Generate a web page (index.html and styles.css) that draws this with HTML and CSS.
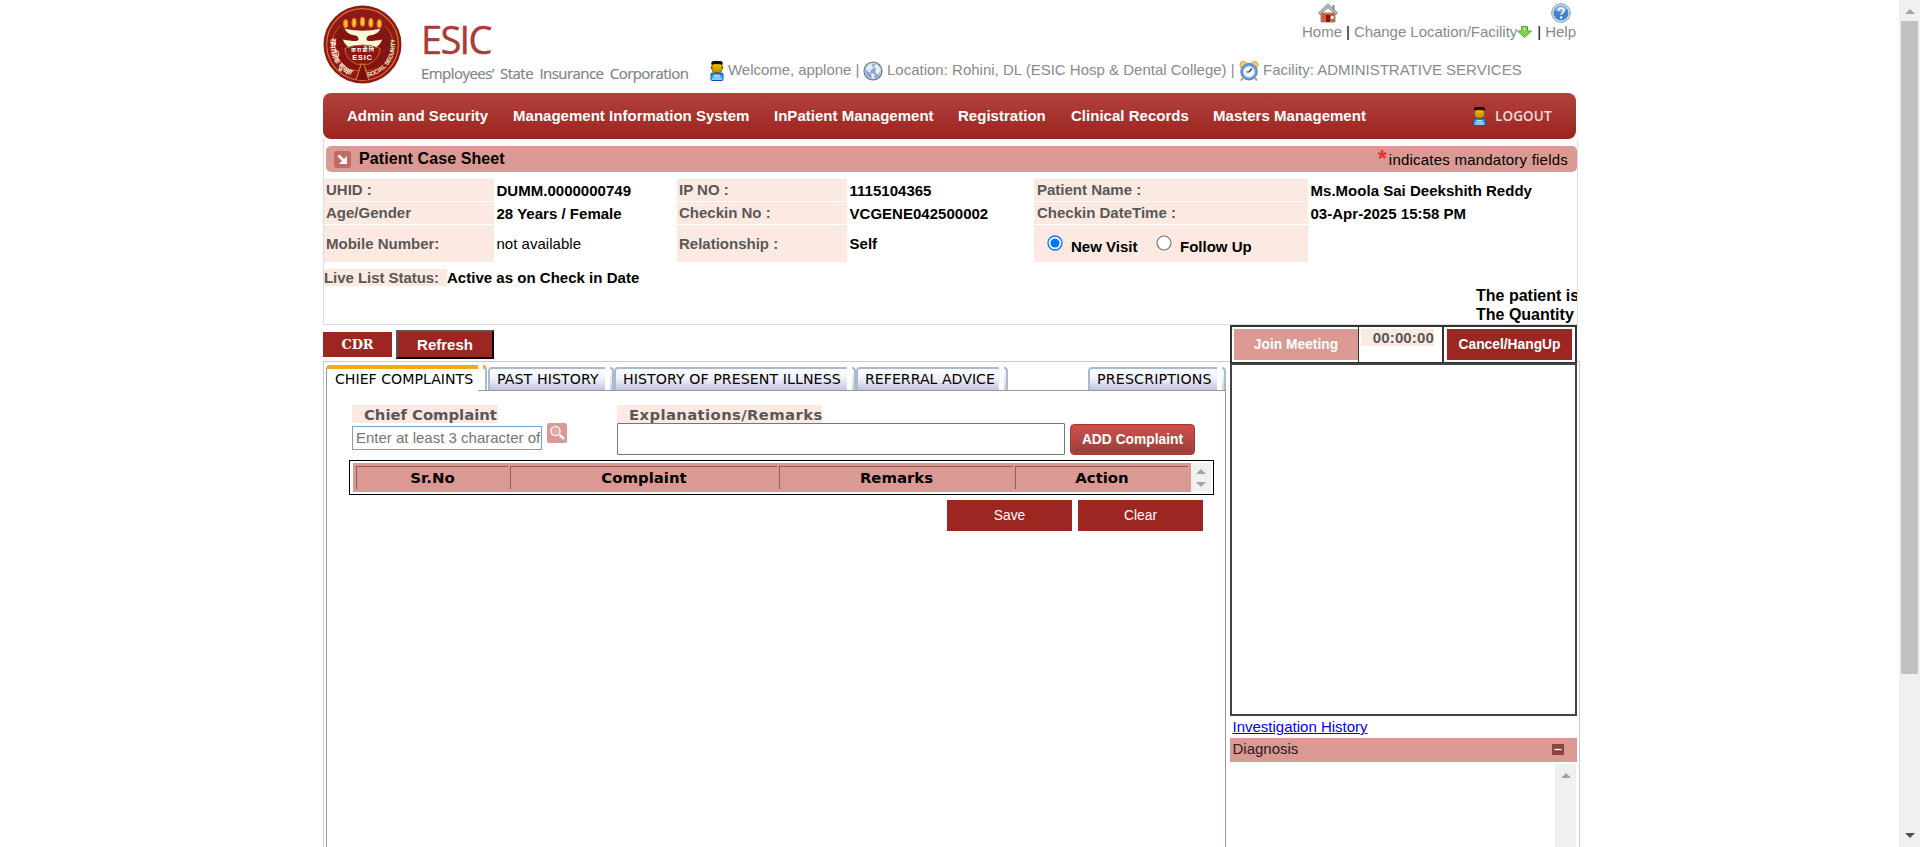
FILE: index.html
```html
<!DOCTYPE html>
<html lang="en">
<head>
<meta charset="utf-8">
<title>Patient Case Sheet</title>
<link rel="stylesheet" href="styles.css">
</head>
<body>
<svg class="defs" width="0" height="0">
  <defs>
    <linearGradient id="face" x1="0" y1="0" x2="0" y2="1"><stop offset="0" stop-color="#f0c400"/><stop offset="1" stop-color="#c48c00"/></linearGradient>
    <linearGradient id="shirt" x1="0" y1="0" x2="0" y2="1"><stop offset="0" stop-color="#0a7df0"/><stop offset="1" stop-color="#8fdcff"/></linearGradient>
    <symbol id="person" viewBox="0 0 13 20">
      <rect x="0" y="11.5" width="13" height="8.5" rx="2" fill="#0b4fc4"/>
      <rect x="1" y="12.5" width="11" height="6.5" rx="1" fill="url(#shirt)"/>
      <path d="M3.5 14.3h6M3.5 16h6" stroke="#c8efff" stroke-width="1"/>
      <path d="M4 10h5v3H4z" fill="#8a5a00"/>
      <rect x=".3" y="4.500" width="12.400" height="4" rx="2" fill="#8a5f00"/>
      <rect x="1.500" y="2" width="10" height="9.500" rx="3" fill="url(#face)" stroke="#6b4800" stroke-width=".6"/>
      <path d="M.8 3.800V2Q1 0 3 0h7q2 0 2.200 2v1.800Q6.500 2.400.8 3.800z" fill="#151008"/>
    </symbol>
  </defs>
</svg>
<div class="screen">
  <main class="page">
    <header class="header">
      <div class="brand">
        <svg class="seal" viewBox="0 0 80 80">
          <circle cx="40" cy="40" r="39.500" fill="#8d1a17"/>
          <circle cx="40" cy="40" r="36.300" fill="#8d1a17" stroke="#d8752a" stroke-width="1.200"/>
          <path d="M40 15A26 26 0 1 0 40 66A26 26 0 1 0 40 15" fill="#841411" stroke="#c25a20" stroke-width="1"/>
          <path d="M19 26c-3-6 0-12 5-14h32c5 2 8 8 5 14z" fill="#8d1a17"/>
          <g fill="#ffd23c" stroke="#f07c1c" stroke-width="1.300">
            <ellipse cx="23" cy="19" rx="2" ry="4"/><ellipse cx="31.500" cy="18" rx="2" ry="4.300"/><ellipse cx="40" cy="17" rx="2" ry="4.500"/><ellipse cx="48.500" cy="18" rx="2" ry="4.300"/><ellipse cx="57" cy="19" rx="2" ry="4"/>
          </g>
          <path d="M22 24Q40 28 58 24Q56 30 47 31Q44 32 44 35Q44 38 60 35Q57 43 49 45H31Q23 43 20 35Q36 38 36 35Q36 32 33 31Q24 30 22 24z" fill="#fffbd6"/>
          <path d="M22 44Q40 37 58 44Q57 55 46 60H34Q23 55 22 44z" fill="#8a1712" stroke="#c9682a" stroke-width="1"/>
          <path d="M33.500 76l5-16h3l5 16" fill="#7a100e" stroke="#d8752a" stroke-width="1.200"/>
          <text x="40" y="48" text-anchor="middle" class="seal-hindi">क रा बी नि</text>
          <text x="40" y="56" text-anchor="middle" class="seal-esic">ESIC</text>
          <path id="arcR" d="M45 72.500A32.500 32.500 0 0 0 72 33" fill="none"/>
          <path id="arcL" d="M8.500 33A32.500 32.500 0 0 0 36 73" fill="none"/>
          <text class="seal-ring"><textPath href="#arcR">SOCIAL SECURITY</textPath></text>
          <text class="seal-ring hindi"><textPath href="#arcL">सामाजिक सुरक्षा</textPath></text>
        </svg>
        <div class="brand-text">
          <div class="brand-name">ESIC</div>
          <div class="brand-sub">Employees’ State Insurance Corporation</div>
        </div>
      </div>
      <div class="header-info">
        <div class="top-links">
          <a class="top-link"><svg class="ico20 home" viewBox="0 0 20 20"><path d="M14.500 2h2v6h-2z" fill="#888"/><path d="M3 10h14v9H3z" fill="#e4572e" stroke="#8a8f94"/><path d="M8 12h4v7H8z" fill="#7c1d0c"/><path d="M13 13h2.500v3H13z" fill="#fff"/><path d="M10 .8l9.500 9.200-1.800 1.500L10 4.500l-7.700 7L.5 10z" fill="#b9bec2" stroke="#666c70" stroke-width=".8"/></svg><span>Home</span></a>
          <span class="bar b1">|</span>
          <a class="top-link change">Change Location/Facility</a>
          <svg class="down" viewBox="0 0 15 12"><path d="M4.500.5h6V5h4L7.500 11.500.5 5h4z" fill="#7ed348" stroke="#4fae2a"/><path d="M6 1.500h2V6" fill="#c5f29c"/></svg>
          <span class="bar b2">|</span>
          <a class="top-link"><svg class="ico20 help" viewBox="0 0 20 20"><circle cx="10" cy="10" r="9.300" fill="#d7e6f5" stroke="#7d97b5" stroke-width="1"/><circle cx="10" cy="10" r="7.500" fill="#3f86cf"/><path d="M4 7a6.500 6.500 0 0 1 12 0q-6 4-12 0z" fill="#7db4ea"/><path d="M7.300 7.800q.2-2.600 2.800-2.600 2.700 0 2.700 2.300 0 1.500-1.500 2.400-1.100.7-1.100 1.900" fill="none" stroke="#fff" stroke-width="1.800"/><circle cx="10.200" cy="14.500" r="1.200" fill="#fff"/></svg><span>Help</span></a>
        </div>
        <div class="welcome">
          <svg class="person"><use href="#person"/></svg><span class="w-user">Welcome, applone |</span>
          <svg class="ico20" viewBox="0 0 20 20"><circle cx="10" cy="10" r="9" fill="#86a4cc" stroke="#66768e" stroke-width="1.200"/><path d="M3 7q2-5 7-5l-1 3 2 2-3 2-1 3-3-2zM12 3q5 1 6 6l-3 5-3-3 1-3-2-2zM8 12l4 1-1 5H9z" fill="#e6edf6"/><circle cx="10" cy="10" r="7.800" fill="none" stroke="#c5d3e6"/></svg><span class="w-loc">Location: Rohini, DL (ESIC Hosp &amp; Dental College) |</span>
          <svg class="ico20" viewBox="0 0 20 20"><path d="M4 17l-2 2.500M16 17l2 2.500" stroke="#b99b55" stroke-width="2"/><circle cx="4.500" cy="4" r="3.600" fill="#f3cb73" stroke="#d9a441"/><circle cx="15.500" cy="4" r="3.600" fill="#f3cb73" stroke="#d9a441"/><circle cx="10" cy="10.800" r="8.200" fill="#6f9fe0" stroke="#4b7cc4"/><circle cx="10" cy="10.800" r="5.600" fill="#f2f7ff"/><path d="M10 11l3-3.500M10 11H7.500" stroke="#334" stroke-width="1.200"/></svg><span class="w-fac">Facility: ADMINISTRATIVE SERVICES</span>
        </div>
      </div>
    </header>

    <nav class="nav">
      <a class="n1">Admin and Security</a><a class="n2">Management Information System</a><a class="n3">InPatient Management</a><a class="n4">Registration</a><a class="n5">Clinical Records</a><a class="n6">Masters Management</a>
      <a class="logout"><svg class="person small"><use href="#person"/></svg>LOGOUT</a>
    </nav>

    <section class="patient">
      <div class="titlebar">
        <svg class="title-ico" viewBox="0 0 17 17"><rect width="17" height="17" rx="3" fill="#bf6b68"/><path d="M4.500 4.500L10.500 10.500" stroke="#fff" stroke-width="2.600"/><path d="M13 5v8H5z" fill="#fff"/></svg>
        <h1>Patient Case Sheet</h1>
        <span class="mandatory"><b>*</b><span>indicates mandatory fields</span></span>
      </div>
      <div class="facts">
        <div class="k">UHID :</div><div class="v">DUMM.0000000749</div><div class="k">IP NO :</div><div class="v">1115104365</div><div class="k">Patient Name :</div><div class="v">Ms.Moola Sai Deekshith Reddy</div>
        <div class="k">Age/Gender</div><div class="v">28 Years / Female</div><div class="k">Checkin No :</div><div class="v">VCGENE042500002</div><div class="k">Checkin DateTime :</div><div class="v">03-Apr-2025 15:58 PM</div>
        <div class="k">Mobile Number:</div><div class="v plain">not available</div><div class="k">Relationship :</div><div class="v">Self</div>
        <div class="k visit">
          <svg class="radio" viewBox="0 0 16 16"><circle cx="8" cy="8" r="7" fill="#fff" stroke="#0075ff" stroke-width="1.300"/><circle cx="8" cy="8" r="4.500" fill="#0075ff"/></svg><span class="r1">New Visit</span>
          <svg class="radio" viewBox="0 0 16 16"><circle cx="8" cy="8" r="7" fill="#fff" stroke="#767676" stroke-width="1.200"/></svg><span class="r2">Follow Up</span>
        </div><div class="v"></div>
      </div>
      <div class="live"><span class="live-k">Live List Status:</span><span class="live-v">Active as on Check in Date</span></div>
      <div class="notice">The patient is<br>The Quantity</div>
    </section>

    <section class="work">
      <div class="left">
        <div class="toolbar"><button class="cdr">CDR</button><button class="refresh">Refresh</button></div>
        <div class="frame">
          <div class="tabs">
            <div class="tab t1 active"><span>CHIEF COMPLAINTS</span><i></i></div><div class="tab t2"><span>PAST HISTORY</span><i></i></div><div class="tab t3"><span>HISTORY OF PRESENT ILLNESS</span><i></i></div><div class="tab t4"><span>REFERRAL ADVICE</span><i></i></div><div class="tab t5"><span>PRESCRIPTIONS</span><i></i></div>
          </div>
          <div class="tabpage">
            <div class="form">
              <div class="f-chief">
                <div class="lbl">Chief Complaint</div>
                <div class="find"><div class="input">Enter at least 3 character of</div>
                <svg class="lens" viewBox="0 0 20 20"><rect width="20" height="20" rx="2" fill="#db9993"/><circle cx="8.500" cy="8" r="4.600" fill="#e2aaa5" stroke="#fff" stroke-width="1.300"/><path d="M12.500 12l4.500 4" stroke="#fff" stroke-width="2.400"/></svg></div>
              </div>
              <div class="f-rem"><div class="lbl rem">Explanations/Remarks</div><div class="area"></div></div>
              <button class="add">ADD Complaint</button>
            </div>
            <div class="grid">
              <div class="grid-head"><div>Sr.No</div><div>Complaint</div><div>Remarks</div><div>Action</div></div>
              <div class="grid-scroll"><i class="up"></i><i class="dn"></i></div>
            </div>
            <div class="actions"><button>Save</button><button>Clear</button></div>
          </div>
        </div>
      </div>
      <aside class="side">
        <div class="meet">
          <div class="c1"><button class="join">Join Meeting</button></div>
          <div class="c2"><span>00:00:00</span></div>
          <div class="c3"><button class="hang">Cancel/HangUp</button></div>
        </div>
        <div class="video"></div>
        <div class="inv"><a>Investigation History</a></div>
        <div class="diag"><span>Diagnosis</span><svg viewBox="0 0 12 11"><rect width="12" height="11" fill="#8b4440"/><path d="M2.500 5.500h7" stroke="#fff" stroke-width="1.300"/></svg></div>
        <div class="diag-body"><div class="diag-scroll"><i class="up"></i></div></div>
      </aside>
      <div class="edge"></div>
    </section>
  </main>
  <div class="scrollbar"><i class="up"></i><div class="thumb"></div><i class="dn dark"></i></div>
</div>
</body>
</html>
```
FILE: styles.css
```css
* { box-sizing: border-box; }
html, body { margin: 0; height: 847px; overflow: hidden; background: #fff; }
body { font: 15px/17px "Liberation Sans", Arial, sans-serif; color: #000; white-space: nowrap; }
button { font: bold 13.8px "Liberation Sans", Arial, sans-serif; border: 0; padding: 0; margin: 0; color: #fff; background: #9c2621; }
svg { display: block; flex: none; }
.defs { position: absolute; }
.screen { display: flex; height: 847px; overflow: hidden; }
.page { width: 1899px; padding-left: 323px; }

/* header */
.header { display: flex; height: 93px; width: 1253px; }
.brand { display: flex; width: 387px; flex: none; padding-top: 5px; }
.seal { width: 79px; height: 79px; }
.seal-hindi { font: bold 5.500px "Noto Sans", sans-serif; fill: #fff; }
.seal-esic { font: bold 7.500px "Liberation Sans", sans-serif; fill: #fff; letter-spacing: 0.8px; }
.seal-ring { font: bold 6px "Liberation Sans", sans-serif; fill: #ffe9d2; letter-spacing: -0.15px; }
.seal-ring.hindi { font-size: 8px; letter-spacing: 0; }
.brand-text { padding-left: 19px; }
.brand-name { font: 38px/44px "Open Sans", "Noto Sans", sans-serif; color: #a93b39; letter-spacing: -1.7px; padding-top: 12px; height: 57px; -webkit-text-stroke: 0.4px #a93b39; }
.brand-sub { font: 15px/20px "Open Sans", sans-serif; color: #7d8488; letter-spacing: -0.55px; word-spacing: 3px; padding-top: 1px; -webkit-text-stroke: 0.2px #7d8488; }
.header-info { flex: 1; }
.top-links { display: flex; align-items: flex-end; justify-content: flex-end; height: 40px; color: #8a8a8a; }
.top-link { display: flex; flex-direction: column; align-items: center; }
.ico20 { width: 20px; height: 20px; }
.home { margin-left: 11px; }
.bar { color: #000; }
.b1 { padding: 0 4px; }
.change { letter-spacing: -0.04px; }
.down { width: 15px; height: 12px; margin-bottom: 2px; }
.b2 { padding: 0 4px 0 5px; }
.welcome { display: flex; align-items: center; height: 22px; margin-top: 20px; color: #8a8a8a; }
.person { width: 14px; height: 20px; }
.w-user { width: 139px; padding-left: 4px; flex: none; letter-spacing: -0.04px; padding-bottom: 3px; }
.w-loc { width: 356px; padding-left: 4px; flex: none; letter-spacing: 0; padding-bottom: 3px; }
.w-fac { padding-left: 4px; padding-bottom: 3px; }

/* navigation */
.nav { display: flex; align-items: center; width: 1253px; height: 46px; padding: 0 0 1px 24px; border-radius: 8px; background: linear-gradient(#b3423c, #9b2420); color: #fff; font-weight: bold; }
.nav a { flex: none; letter-spacing: 0.02px; }
.n1 { width: 166px; } .n2 { width: 261px; } .n3 { width: 184px; } .n4 { width: 113px; } .n5 { width: 142px; } .n6 { width: 260px; }
.nav .logout { display: flex; align-items: center; gap: 9px; padding-top: 1px; color: #f3dcda; font: 600 13.5px/18px "Open Sans", sans-serif; letter-spacing: 0.1px; }
.small { width: 13px; height: 19px; }

/* patient summary */
.patient { width: 1255px; height: 186px; border: 1px solid #ddd; border-top: 0; padding-top: 7px; overflow: hidden; }
.titlebar { display: flex; align-items: center; height: 26px; margin-left: 2px; padding-left: 8px; border-radius: 5px; background: #db9993; }
.title-ico { width: 17px; height: 17px; }
.titlebar h1 { margin: 0 0 0 8px; font-size: 16px; line-height: 20px; letter-spacing: 0.09px; }
.mandatory { margin-left: auto; display: flex; padding-right: 9px; letter-spacing: 0.22px; }
.mandatory b { color: #e8302c; font-size: 23px; line-height: 20px; height: 17px; font-weight: bold; margin: -2px 2px 0 0; }
.facts { display: grid; grid-template-columns: 170px 183px 170px 187px 274px 1fr; grid-template-rows: 22px 22px 37px; row-gap: 1px; margin-top: 7px; }
.k { background: #fce9e2; color: #585858; font-weight: bold; padding: 2px 0 0 2px; }
.k:nth-child(6n+5) { padding-left: 3px; }
.v { font-weight: bold; padding: 3px 0 0 2.500px; letter-spacing: 0.02px; }
.k:nth-child(n+13) { padding-top: 10px; }
.v:nth-child(n+13) { padding-top: 10px; }
.v.plain { font-weight: normal; }
.k.visit { display: flex; padding: 10px 0 0 13px; color: #000; }
.radio { width: 16px; height: 16px; }
.r1 { padding: 3px 0 0 8px; width: 93px; }
.r2 { padding: 3px 0 0 8px; }
.live { display: flex; margin-top: 7px; font-weight: bold; }
.live-k { background: #fce9e2; color: #585858; width: 123px; letter-spacing: -0.05px; }
.live-v { letter-spacing: 0.02px; }
.notice { margin: 0 0 0 1152px; font: bold 16px/19px "Liberation Sans", Arial, sans-serif; width: 150px; }

/* workspace */
.work { display: flex; height: 522px; }
.left { width: 907px; flex: none; }
.toolbar { display: flex; align-items: center; height: 36px; padding-top: 3px; }
.cdr { width: 69px; height: 25px; font: bold 13px "DejaVu Serif", "Liberation Serif", serif; letter-spacing: -0.2px; }
.refresh { width: 98px; height: 29px; margin-left: 4px; font-size: 15px; border: 2px solid; border-color: #555 #000 #000 #555; }
.frame { height: 486px; border: 1px solid #ccc; border-width: 1px 0 0 1px; padding: 3px 0 0 2px; }
.tabs { display: flex; align-items: flex-end; height: 26px; width: 900px; border-bottom: 1px solid #919b9c; font: 14.15px/18px "DejaVu Sans", Verdana, sans-serif; }
.tab { display: flex; height: 23px; flex: none; }
.tab span { flex: 1; padding: 1px 0 0 7px; border: solid #a9bccb; border-width: 2px 0 0 2px; border-top-left-radius: 4px; background: linear-gradient(#fff 0%, #eeeef8 50%, #c4c4e2 100%); }
.tab i { width: 4px; margin-left: 5px; border: solid #a9bccb; border-width: 2px 2px 0 0; border-top-right-radius: 4px; background: linear-gradient(#fff, #d0d0e6); }
.tab.active { height: 26px; margin-bottom: -1px; }
.tab.active span { background: #fff; border-color: #f5a623 #fff #fff #919b9c; border-width: 4px 0 0 1px; padding: 1px 0 0 8px; }
.tab.active i { background: #fff; border-color: #f5a623 #a9bccb; border-width: 4px 2px 0 0; margin-bottom: 1px; }
.t1 { width: 161px; } .t2 { width: 126px; margin-left: 1px; letter-spacing: 0.1px; } .t3 { width: 242px; letter-spacing: 0.08px; } .t4 { width: 152px; } .t5 { width: 138px; margin-left: 80px; letter-spacing: 0.2px; }
.tabpage { width: 900px; height: 456px; border: solid #919b9c; border-width: 0 1px; padding: 14px 0 0 22px; }
.form { display: flex; height: 55px; }
.f-chief { width: 265px; margin-left: 3px; }
.lbl { width: 146px; height: 18px; padding-left: 12px; background: #fce9e2; color: #585858; font: bold 14.8px/19px "DejaVu Sans", Verdana, sans-serif; }
.find { display: flex; gap: 5px; }
.lens { width: 20px; height: 20px; }
.input { width: 190px; height: 24px; margin-top: 3px; border: 1px solid #7f9db9; padding: 2px 0 2px 3px; color: #757575; line-height: 18px; letter-spacing: 0; }
.lbl.rem { width: 205px; letter-spacing: 0.4px; }
.area { width: 448px; height: 32px; border: 1px solid #767676; border-radius: 1px; }
.add { width: 125px; height: 31px; margin: 19px 0 0 5px; border: 1px solid #a43a36; border-radius: 4px; background: linear-gradient(#d0504c, #94403a); box-shadow: inset 0 0 3px #d8403c; }
.grid { display: flex; width: 865px; height: 35px; border: 1px solid #000; padding: 2px 2px 2px 3px; background: #fff; }
.grid-head { display: grid; grid-template-columns: 152px 267px 234px 173px; column-gap: 2px; width: 838px; padding: 3px 3px; background: #db9993; font: bold 14.9px/23px "DejaVu Sans", Verdana, sans-serif; text-align: center; }
.grid-head div { border: solid #8f5f5b; border-width: 1px 0 0 1px; height: 23px; }
.grid-scroll, .diag-scroll, .scrollbar { width: 21px; background: #f0f0f0; display: flex; flex-direction: column; align-items: center; }
.grid-scroll { justify-content: space-between; padding: 6px 0 5px; }
.up { border: solid transparent; border-width: 0 5px 5px; border-bottom-color: #a3a3a3; }
.dn { border: solid transparent; border-width: 5px 5px 0; border-top-color: #a3a3a3; }
.dn.dark { border-top-color: #505050; }
.actions { display: flex; gap: 6px; margin: 5px 0 0 598px; }
.actions button { width: 125px; height: 31px; font-weight: normal; }

/* side panel */
.side { width: 347px; flex: none; }
.meet { display: flex; height: 38px; border: solid #333; border-width: 2px 2px 1px 2px; }
.c1 { width: 126px; padding: 2px 0 0 2px; }
.c2 { width: 84px; padding: 2px 0 0 2px; border-left: 1px solid #333; }
.c3 { border-left: 2px solid #333; flex: 1; padding: 2px 0 0 3px; }
.c2 span { display: block; width: 73px; height: 17px; background: #fce9e2; color: #585858; font-weight: bold; text-align: right; line-height: 17px; letter-spacing: 0.15px; }
.join { width: 124px; height: 31px; background: #db9993; }
.hang { width: 125px; height: 31px; }
.video { height: 353px; border: 2px solid #444; }
.inv { height: 22px; padding: 2px 0 0 2.500px; color: #0000ee; }
.inv a { text-decoration: underline; }
.diag { display: flex; justify-content: space-between; height: 24px; padding: 2px 13px 0 2.500px; background: #db9993; color: #222; }
.diag svg { width: 12px; height: 11px; margin-top: 4px; }
.diag-body { display: flex; justify-content: flex-end; height: 85px; padding: 2px 1px 0 0; }
.diag-scroll { padding-top: 9px; }
.edge { width: 3px; margin-top: 36px; border: solid #ccc; border-width: 1px 1px 0 0; }

/* window scrollbar */
.scrollbar { height: 847px; padding: 9px 0; }
.thumb { width: 17px; height: 653px; margin: 7px 0 auto; background: #c1c1c1; }
```
